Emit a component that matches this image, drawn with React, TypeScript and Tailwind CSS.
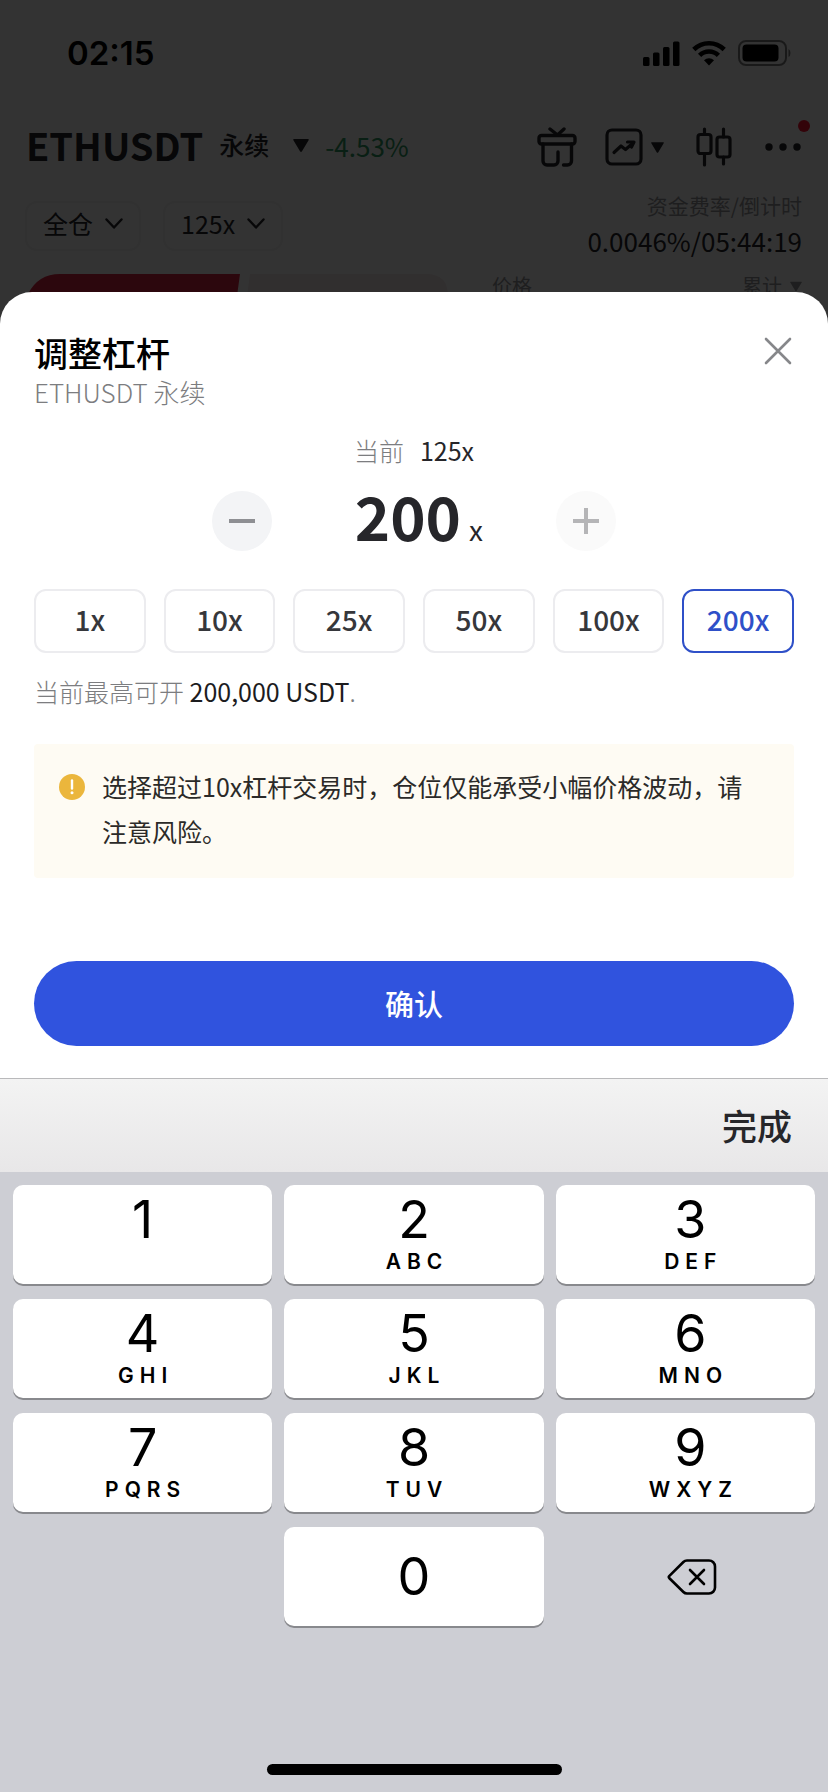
import { useState } from 'react';
import type { FC, ReactNode } from 'react';

const MAX_LEVERAGE = 200;
const CURRENT_LEVERAGE = 125;
const PRESETS = [1, 10, 25, 50, 100, 200];

const KEYS = [
  { digit: '1', letters: '' },
  { digit: '2', letters: 'ABC' },
  { digit: '3', letters: 'DEF' },
  { digit: '4', letters: 'GHI' },
  { digit: '5', letters: 'JKL' },
  { digit: '6', letters: 'MNO' },
  { digit: '7', letters: 'PQRS' },
  { digit: '8', letters: 'TUV' },
  { digit: '9', letters: 'WXYZ' },
];

const Caret: FC<{ className?: string }> = ({ className }) => (
  <svg viewBox="0 0 16 13" className={className} fill="currentColor" aria-hidden="true">
    <path d="M1 0h14q1.400 0 .6 1.200L9 12.200q-1 1.400-2 0L.4 1.200Q-.4 0 1 0z" />
  </svg>
);

const ChevronDown: FC = () => (
  <svg viewBox="0 0 18 12" className="w-[18px] h-3" fill="none" stroke="currentColor" strokeWidth="2.400" aria-hidden="true">
    <path d="M1.500 1.500 9 9.500l7.500-8" strokeLinecap="round" strokeLinejoin="round" />
  </svg>
);

const StatusBar: FC = () => (
  <div className="h-[106px] pl-[67px] pr-[37px] flex items-center justify-between text-black">
    <span className="font-['Inter',sans-serif] text-[33px] leading-10 font-semibold">02:15</span>
    <div className="flex items-center gap-3">
      <svg viewBox="0 0 37 25" className="w-[37px] h-[25px]" fill="currentColor" aria-hidden="true">
        <rect x="0" y="16" width="6.500" height="9" rx="1.500" />
        <rect x="10" y="11.500" width="6.500" height="13.500" rx="1.500" />
        <rect x="20" y="6" width="6.500" height="19" rx="1.500" />
        <rect x="30" y="0.500" width="6.500" height="24.500" rx="1.500" />
      </svg>
      <svg viewBox="0 0 34 26" className="w-[34px] h-[26px]" fill="none" stroke="currentColor" strokeWidth="4.600" aria-hidden="true">
        <path d="M1.800 9.500a21.500 21.500 0 0 1 30.400 0" />
        <path d="M7.600 15.400a13.300 13.300 0 0 1 18.800 0" />
        <path d="M17 25.500l-5-5.200a7.200 7.200 0 0 1 10 0z" fill="currentColor" stroke="none" />
      </svg>
      <svg viewBox="0 0 53 26" className="w-[53px] h-[26px]" fill="none" aria-hidden="true">
        <rect x="1" y="1" width="47" height="24" rx="7" stroke="currentColor" strokeWidth="2" opacity="0.500" />
        <rect x="4.500" y="4.500" width="36" height="17" rx="4" fill="currentColor" />
        <path d="M50.500 9v8q2-1 2-4t-2-4z" fill="currentColor" opacity="0.500" />
      </svg>
    </div>
  </div>
);

const PillButton: FC<{ children: ReactNode }> = ({ children }) => (
  <button type="button" className="h-[50px] px-4 pb-1 flex items-center gap-3 rounded-xl border-2 border-[#f2f2f2] text-[25px]">
    {children}
    <ChevronDown />
  </button>
);

const TradePage: FC = () => (
  <div className="relative bg-white text-[#26262a]">
    <StatusBar />

    <div className="h-[82px] pl-[26px] pr-[26px] flex items-center justify-between">
      <button type="button" className="pb-1 flex items-center">
        <span className="text-[38px] leading-[48px] font-bold">ETHUSDT</span>
        <span className="ml-4 text-[25px] font-medium">永续</span>
        <Caret className="ml-6 w-4 h-[13px]" />
        <span className="ml-4 text-[26px] text-[#2e9a63]">-4.53%</span>
      </button>
      <div className="flex items-center">
        <button type="button" aria-label="奖励">
          <svg viewBox="0 0 40 40" className="w-10 h-10" fill="none" stroke="currentColor" strokeWidth="3.400" strokeLinecap="round" strokeLinejoin="round" aria-hidden="true">
            <path d="M13 2l7.500 6L27 2" />
            <rect x="2" y="8.500" width="36" height="8.500" rx="2.500" />
            <path d="M6 17v17a4 4 0 0 0 4 4h7a4 4 0 0 0 4-4V25" />
            <path d="M34.500 17v17a4 4 0 0 1-4 4h-4" />
          </svg>
        </button>
        <button type="button" aria-label="图表" className="ml-7 flex items-center gap-2">
          <svg viewBox="0 0 38 38" className="w-[38px] h-[38px]" fill="none" stroke="currentColor" strokeWidth="3.200" strokeLinecap="round" strokeLinejoin="round" aria-hidden="true">
            <rect x="2" y="2" width="34" height="34" rx="5" />
            <path d="M9 24.500l7-6.500 4.500 3.500 7.500-6.500" />
            <path d="M22.500 14h6.500l-2.500 5" />
          </svg>
          <Caret className="w-[13px] h-[11px]" />
        </button>
        <button type="button" aria-label="K线" className="ml-8">
          <svg viewBox="0 0 36 40" className="w-9 h-10" fill="none" stroke="currentColor" strokeWidth="3.200" strokeLinecap="round" strokeLinejoin="round" aria-hidden="true">
            <rect x="2" y="7.500" width="13" height="19" rx="2.500" />
            <path d="M8.500 2v5.500M8.500 26.500V38" />
            <rect x="21" y="10" width="13" height="20" rx="2.500" />
            <path d="M27.500 2v8M27.500 30v7" />
          </svg>
        </button>
        <button type="button" aria-label="更多" className="relative ml-8">
          <svg viewBox="0 0 38 38" className="w-[38px] h-[38px]" fill="currentColor" aria-hidden="true">
            <circle cx="5" cy="19" r="3.700" />
            <circle cx="19" cy="19" r="3.700" />
            <circle cx="33" cy="19" r="3.700" />
          </svg>
          <span className="absolute -top-2 -right-2 size-3 rounded-full bg-[#ff1030]" />
        </button>
      </div>
    </div>

    <div className="h-[86px] pl-[25px] pr-[26px] flex items-start justify-between">
      <div className="pt-[13px] flex gap-[22px]">
        <PillButton>全仓</PillButton>
        <PillButton>125x</PillButton>
      </div>
      <div className="text-right">
        <p className="text-[21px] leading-[35px] text-[#98989c]">资金费率/倒计时</p>
        <p className="text-[26px] leading-[35px]">0.0046%/05:44:19</p>
      </div>
    </div>

    <div className="h-11 pl-7 pr-[26px] flex">
      <svg viewBox="0 0 420 44" className="w-[420px] h-11" aria-hidden="true">
        <path d="M212 0H32Q10 0 0 20v24h206z" fill="#dc2440" />
        <path d="M222 0h176q22 0 22 22v22H216z" fill="#f5e8ea" />
      </svg>
      <div className="ml-11 flex-1 flex items-start justify-between text-xl leading-6 text-[#98989c]">
        <span>价格</span>
        <span className="flex items-center gap-2">
          累计
          <Caret className="w-3 h-[11px]" />
        </span>
      </div>
    </div>

    <div className="absolute inset-0 bg-black/80" />
  </div>
);

interface LeverageSheetProps {
  value: string;
  onChange: (value: string) => void;
}

const LeverageSheet: FC<LeverageSheetProps> = ({ value, onChange }) => {
  const leverage = Number(value) || 0;

  const step = (amount: number) => {
    const next = Math.min(MAX_LEVERAGE, Math.max(1, leverage + amount));
    onChange(String(next));
  };

  return (
    <section className="relative -mt-[26px] rounded-t-[32px] bg-white px-[34px] pt-[38px] pb-8 text-[#26262a]">
      <div className="flex items-start justify-between">
        <div>
          <h1 className="text-[34px] leading-[46px] font-medium text-black">调整杠杆</h1>
          <p className="text-[26px] leading-8 font-light text-[#7c7d80]">ETHUSDT 永续</p>
        </div>
        <button type="button" aria-label="关闭" className="mt-[7px] mr-[2px]">
          <svg viewBox="0 0 28 28" className="size-7" fill="none" stroke="#86878a" strokeWidth="2.600" strokeLinecap="round" aria-hidden="true">
            <path d="M2 2l24 24M26 2L2 26" />
          </svg>
        </button>
      </div>

      <p className="mt-[25px] text-center text-[25px] leading-[34px]">
        <span className="mr-4 font-light text-[#7c7d80]">当前</span>
        {CURRENT_LEVERAGE}x
      </p>

      <div className="mt-6 h-[60px] flex items-center justify-center">
        <button
          type="button"
          aria-label="减少"
          onClick={() => step(-1)}
          className="size-[60px] rounded-full bg-[#f3f4f6] flex items-center justify-center"
        >
          <span className="w-[26px] h-1 bg-[#8e8f93]" />
        </button>
        <label className="w-[284px] pl-2 pb-3 flex items-baseline justify-center gap-2">
          <input
            aria-label="杠杆倍数"
            inputMode="numeric"
            value={value}
            onChange={(e) => onChange(e.target.value)}
            className="w-[108px] h-[60px] text-right text-[60px] leading-[60px] font-bold outline-none"
          />
          <span className="text-[28px] leading-8">x</span>
        </label>
        <button
          type="button"
          aria-label="增加"
          disabled={leverage >= MAX_LEVERAGE}
          onClick={() => step(1)}
          className="size-[60px] rounded-full bg-[#fafafa] flex items-center justify-center"
        >
          <svg viewBox="0 0 26 26" className="size-[26px]" stroke="#b5b5b7" strokeWidth="4" aria-hidden="true">
            <path d="M13 0v26M0 13h26" />
          </svg>
        </button>
      </div>

      <div className="mt-[38px] grid grid-cols-6 gap-[18px]">
        {PRESETS.map((preset) => (
          <button
            key={preset}
            type="button"
            onClick={() => onChange(String(preset))}
            className={`h-16 pb-1 rounded-xl border-2 text-[28px] font-medium ${
              preset === leverage ? 'border-[#2f50c8] text-[#2f50c8]' : 'border-[#ececef] text-[#36373b]'
            }`}
          >
            {preset}x
          </button>
        ))}
      </div>

      <p className="mt-[21px] text-[25px] leading-[34px] font-light text-[#7c7d80]">
        当前最高可开 <span className="font-normal text-[#1c1c1e]">200,000 USDT</span>.
      </p>

      <div className="mt-9 rounded bg-[#fefbf3] pl-[25px] pr-8 pt-5 pb-6 flex items-start gap-[17px]">
        <svg viewBox="0 0 26 26" className="mt-[10px] size-[26px] shrink-0" aria-hidden="true">
          <circle cx="13" cy="13" r="13" fill="#ebb63c" />
          <path d="M13 6.500v8" stroke="#fff" strokeWidth="2.400" strokeLinecap="round" />
          <circle cx="13" cy="18.800" r="1.500" fill="#fff" />
        </svg>
        <p className="text-[25px] leading-[45px] text-[#2b2a28]">
          选择超过10x杠杆交易时，仓位仅能承受小幅价格波动，请注意风险。
        </p>
      </div>

      <button type="button" className="mt-[83px] w-full h-[85px] rounded-full bg-[#3053de] text-[29px] font-medium text-white">
        确认
      </button>
    </section>
  );
};

interface NumberPadProps {
  onDigit: (digit: string) => void;
  onDelete: () => void;
}

const NumberPad: FC<NumberPadProps> = ({ onDigit, onDelete }) => {
  const keyClass =
    "h-[99px] rounded-[10px] bg-white shadow-[0_2px_0_#88898d] flex flex-col items-center font-['Inter',sans-serif] text-black nth-[3n]:pl-[10px]";

  return (
    <div className="flex-1 flex flex-col bg-[#cdced4]">
      <div className="h-[94px] border-t border-[#b9b9bb] bg-linear-to-b from-[#f3f3f3] to-[#e8e7e8] px-9 flex items-center justify-end">
        <button type="button" className="text-[35px] font-medium text-[#26262a]">
          完成
        </button>
      </div>
      <div className="px-[13px] pt-[13px] grid grid-cols-3 gap-x-3 gap-y-[15px]">
        {KEYS.map(({ digit, letters }) => (
          <button key={digit} type="button" onClick={() => onDigit(digit)} className={`${keyClass} pt-2`}>
            <span className="text-[52px] leading-[54px]">{digit}</span>
            <span className="pl-[6px] text-[21px] leading-[30px] font-semibold tracking-[6px]">{letters}</span>
          </button>
        ))}
        <span />
        <button type="button" onClick={() => onDigit('0')} className={`${keyClass} justify-center`}>
          <span className="text-[52px] leading-[54px]">0</span>
        </button>
        <button type="button" aria-label="删除" onClick={onDelete} className="pl-[14px] flex items-center justify-center">
          <svg viewBox="0 0 50 36" className="w-[50px] h-9" fill="none" stroke="#000" strokeWidth="2.600" strokeLinecap="round" strokeLinejoin="round" aria-hidden="true">
            <path d="M20 1.500h22a6 6 0 0 1 6 6v21a6 6 0 0 1-6 6H20a5 5 0 0 1-3.600-1.500L2.400 19.200a1.700 1.700 0 0 1 0-2.400L16.400 3A5 5 0 0 1 20 1.500z" />
            <path d="M23 11l14 14M37 11L23 25" />
          </svg>
        </button>
      </div>
      <div className="mt-auto mx-auto mb-[17px] w-[295px] h-[11px] rounded-full bg-black" />
    </div>
  );
};

const App: FC = () => {
  const [value, setValue] = useState('200');

  const handleDigit = (digit: string) => {
    setValue((prev) => String(Math.min(MAX_LEVERAGE, Number(prev + digit))));
  };

  return (
    <div className="min-h-screen flex flex-col overflow-hidden bg-[#333] font-['Noto_Sans_CJK_SC',sans-serif]">
      <TradePage />
      <LeverageSheet value={value} onChange={setValue} />
      <NumberPad onDigit={handleDigit} onDelete={() => setValue((prev) => prev.slice(0, -1))} />
    </div>
  );
};

export default App;
